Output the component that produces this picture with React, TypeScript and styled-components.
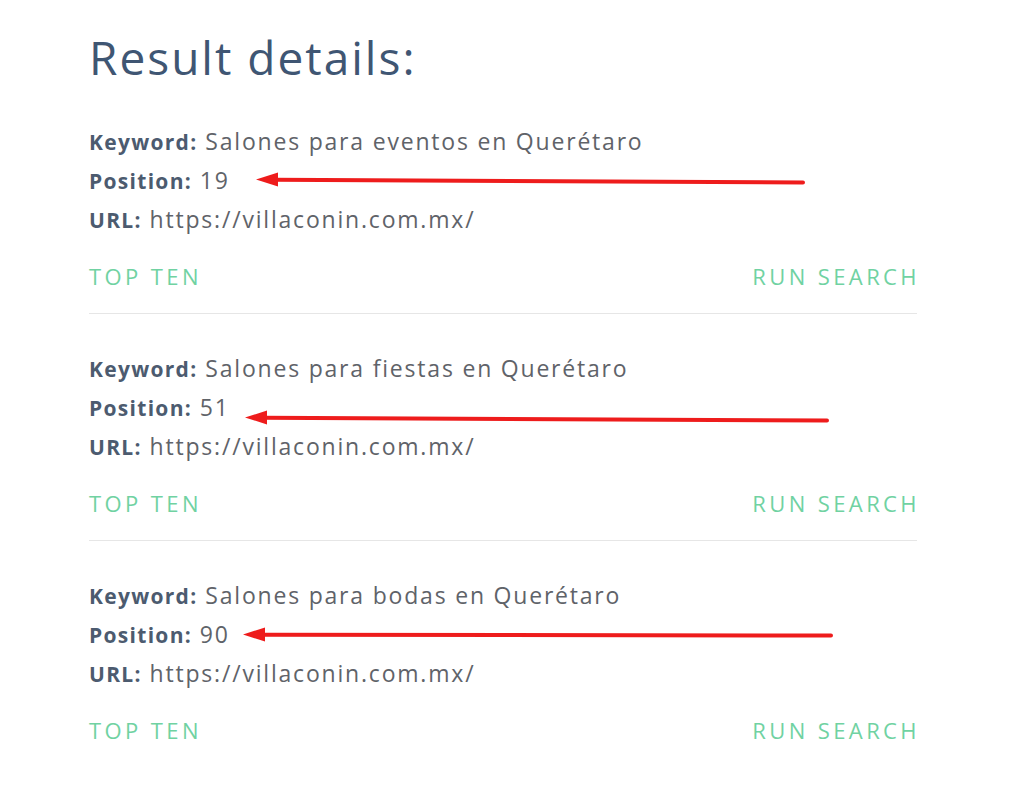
import styled, { createGlobalStyle } from "styled-components";

const GlobalStyle = createGlobalStyle`
  body {
    margin: 0;
    background: #ffffff;
    font-family: "Open Sans", "Noto Sans", sans-serif;
  }
`;

const Page = styled.div`
  width: 828px;
  padding: 27px 0 0 89px;
`;

const Title = styled.h1`
  margin: 0;
  font-size: 46px;
  line-height: 60px;
  font-weight: 400;
  color: #3f5673;
  letter-spacing: 2px;
`;

const Result = styled.div`
  padding: 35px 0 22px;
  border-bottom: 1px solid #e6e6e6;
  &:last-child {
    border-bottom: none;
  }
`;

const Line = styled.div`
  position: relative;
  font-size: 23px;
  line-height: 39px;
  color: #5f6369;
  letter-spacing: 1.8px;
`;

const Label = styled.b`
  font-weight: 700;
  color: #4c5b6f;
  font-size: 21px;
  line-height: 1;
  letter-spacing: 1.3px;
`;

const Actions = styled.div`
  display: flex;
  justify-content: space-between;
  margin-top: 22px;
`;

const ActionBtn = styled.button`
  border: none;
  background: none;
  padding: 0;
  font-family: "Open Sans", sans-serif;
  font-size: 22px;
  line-height: 30px;
  font-weight: 400;
  color: #70d2a2;
  text-transform: uppercase;
  letter-spacing: 3.4px;
  cursor: pointer;
  &:last-child {
    margin-right: -3px;
  }
`;

const Arrow = styled.svg`
  position: absolute;
  left: 0;
  top: 0;
  width: 828px;
  height: 39px;
  overflow: visible;
  pointer-events: none;
`;

interface Item {
  keyword: string;
  position: number;
  arrow: { tx: number; ty: number; ex: number; ey: number };
}

const items: Item[] = [
  {
    keyword: "Salones para eventos en Querétaro",
    position: 19,
    arrow: { tx: 167, ty: 18.5, ex: 714, ey: 21.5 },
  },
  {
    keyword: "Salones para fiestas en Querétaro",
    position: 51,
    arrow: { tx: 156, ty: 29.5, ex: 738, ey: 32.5 },
  },
  {
    keyword: "Salones para bodas en Querétaro",
    position: 90,
    arrow: { tx: 154, ty: 19.5, ex: 742, ey: 20.5 },
  },
];

function RedArrow({ tx, ty, ex, ey }: Item["arrow"]) {
  return (
    <Arrow viewBox="0 0 828 39">
      <line
        x1={tx + 18}
        y1={ty + 0.2}
        x2={ex}
        y2={ey}
        stroke="#ee1c1c"
        strokeWidth="4"
        strokeLinecap="round"
      />
      <polygon
        points={`${tx},${ty} ${tx + 22},${ty - 7} ${tx + 22},${ty + 7}`}
        fill="#ee1c1c"
      />
    </Arrow>
  );
}

export default function App() {
  return (
    <>
      <GlobalStyle />
      <Page>
        <Title>Result details:</Title>
        {items.map((it) => (
          <Result key={it.position}>
            <Line>
              <Label>Keyword:</Label> {it.keyword}
            </Line>
            <Line>
              <Label>Position:</Label> {it.position}
              <RedArrow {...it.arrow} />
            </Line>
            <Line>
              <Label>URL:</Label> https://villaconin.com.mx/
            </Line>
            <Actions>
              <ActionBtn>Top ten</ActionBtn>
              <ActionBtn>Run search</ActionBtn>
            </Actions>
          </Result>
        ))}
      </Page>
    </>
  );
}
